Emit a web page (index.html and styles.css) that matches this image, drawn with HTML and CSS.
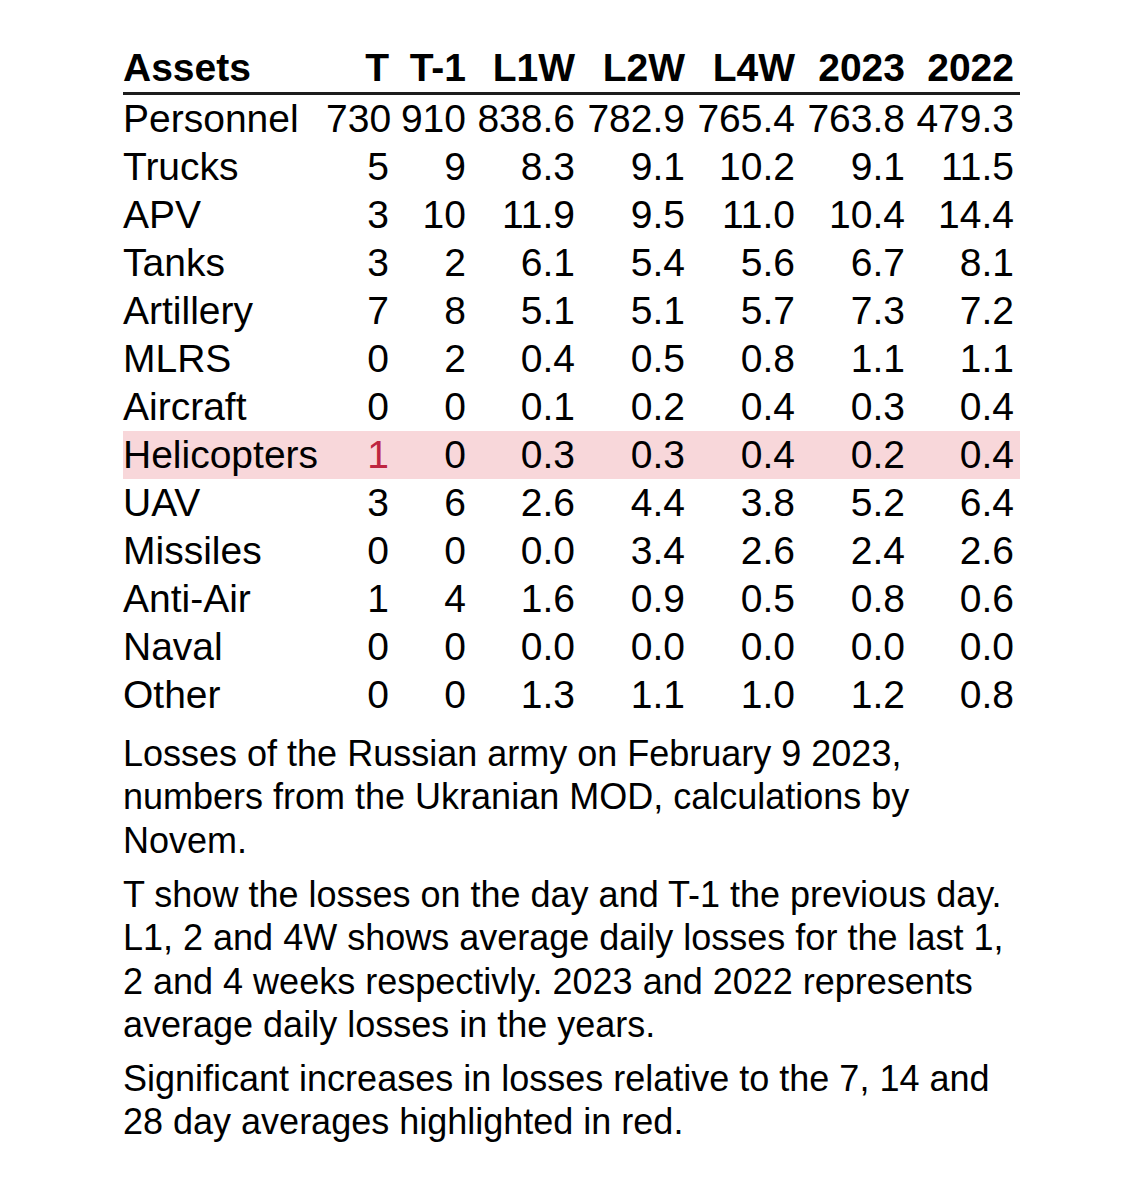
FILE: index.html
```html
<!DOCTYPE html>
<html lang="en">
<head>
<meta charset="utf-8">
<title>Losses of the Russian army</title>
<link rel="stylesheet" href="styles.css">
</head>
<body>
<main class="page">
  <table class="losses">
    <colgroup>
      <col class="c-asset">
      <col class="c-t">
      <col class="c-t1">
      <col class="c-l1w">
      <col class="c-l2w">
      <col class="c-l4w">
      <col class="c-y23">
      <col class="c-y22">
    </colgroup>
    <thead>
      <tr>
        <th class="name">Assets</th>
        <th>T</th>
        <th>T-1</th>
        <th>L1W</th>
        <th>L2W</th>
        <th>L4W</th>
        <th>2023</th>
        <th class="last">2022</th>
      </tr>
    </thead>
    <tbody>
      <tr><td class="name">Personnel</td><td>730</td><td>910</td><td>838.6</td><td>782.9</td><td>765.4</td><td>763.8</td><td class="last">479.3</td></tr>
      <tr><td class="name">Trucks</td><td>5</td><td>9</td><td>8.3</td><td>9.1</td><td>10.2</td><td>9.1</td><td class="last">11.5</td></tr>
      <tr><td class="name">APV</td><td>3</td><td>10</td><td>11.9</td><td>9.5</td><td>11.0</td><td>10.4</td><td class="last">14.4</td></tr>
      <tr><td class="name">Tanks</td><td>3</td><td>2</td><td>6.1</td><td>5.4</td><td>5.6</td><td>6.7</td><td class="last">8.1</td></tr>
      <tr><td class="name">Artillery</td><td>7</td><td>8</td><td>5.1</td><td>5.1</td><td>5.7</td><td>7.3</td><td class="last">7.2</td></tr>
      <tr><td class="name">MLRS</td><td>0</td><td>2</td><td>0.4</td><td>0.5</td><td>0.8</td><td>1.1</td><td class="last">1.1</td></tr>
      <tr><td class="name">Aircraft</td><td>0</td><td>0</td><td>0.1</td><td>0.2</td><td>0.4</td><td>0.3</td><td class="last">0.4</td></tr>
      <tr class="flagged"><td class="name">Helicopters</td><td class="up">1</td><td>0</td><td>0.3</td><td>0.3</td><td>0.4</td><td>0.2</td><td class="last">0.4</td></tr>
      <tr><td class="name">UAV</td><td>3</td><td>6</td><td>2.6</td><td>4.4</td><td>3.8</td><td>5.2</td><td class="last">6.4</td></tr>
      <tr><td class="name">Missiles</td><td>0</td><td>0</td><td>0.0</td><td>3.4</td><td>2.6</td><td>2.4</td><td class="last">2.6</td></tr>
      <tr><td class="name">Anti-Air</td><td>1</td><td>4</td><td>1.6</td><td>0.9</td><td>0.5</td><td>0.8</td><td class="last">0.6</td></tr>
      <tr><td class="name">Naval</td><td>0</td><td>0</td><td>0.0</td><td>0.0</td><td>0.0</td><td>0.0</td><td class="last">0.0</td></tr>
      <tr><td class="name">Other</td><td>0</td><td>0</td><td>1.3</td><td>1.1</td><td>1.0</td><td>1.2</td><td class="last">0.8</td></tr>
    </tbody>
  </table>
  <div class="notes">
    <p>Losses of the Russian army on February 9 2023, numbers from the Ukranian MOD, calculations by Novem.</p>
    <p>T show the losses on the day and T-1 the previous day. L1, 2 and 4W shows average daily losses for the last 1, 2 and 4 weeks respectivly. 2023 and 2022 represents average daily losses in the years.</p>
    <p>Significant increases in losses relative to the 7, 14 and 28 day averages highlighted in red.</p>
  </div>
</main>
</body>
</html>
```

FILE: styles.css
```css
html, body {
  margin: 0;
  padding: 0;
  background: #ffffff;
}

body {
  font-family: "Liberation Sans", Arial, sans-serif;
  color: #000000;
}

.page {
  width: 897px;
  padding: 44px 0 0 123px;
}

.losses {
  width: 897px;
  table-layout: fixed;
  border-collapse: collapse;
  border-spacing: 0;
  font-size: 39px;
  line-height: 48px;
}

.c-asset { width: 203px; }
.c-t { width: 68px; }
.c-t1 { width: 77px; }
.c-l1w { width: 109px; }
.c-l2w { width: 110px; }
.c-l4w { width: 110px; }
.c-y23 { width: 110px; }
.c-y22 { width: 110px; }

.losses th,
.losses td {
  padding: 0 5px 0 0;
  height: 48px;
  text-align: right;
  white-space: nowrap;
  vertical-align: top;
}

.losses th {
  font-weight: 700;
}

.losses thead tr {
  border-bottom: 3px solid #1c1c1c;
}

.losses .name {
  text-align: left;
  padding: 0;
}

.losses .last {
  padding-right: 6px;
}

.losses .flagged {
  background: #f8d7da;
}

.losses .up {
  color: #be2640;
}

.notes {
  width: 895px;
  padding-top: 13px;
  font-size: 36px;
  line-height: 43.4px;
}

.notes p {
  margin: 0 0 10.5px 0;
}
```
